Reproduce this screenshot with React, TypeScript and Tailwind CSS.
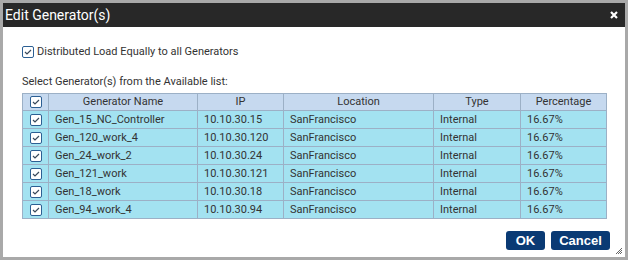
import React from 'react';

const rows = [
  { name: 'Gen_15_NC_Controller', ip: '10.10.30.15' },
  { name: 'Gen_120_work_4', ip: '10.10.30.120' },
  { name: 'Gen_24_work_2', ip: '10.10.30.24' },
  { name: 'Gen_121_work', ip: '10.10.30.121' },
  { name: 'Gen_18_work', ip: '10.10.30.18' },
  { name: 'Gen_94_work_4', ip: '10.10.30.94' },
];

function Check() {
  return (
    <span className="inline-flex w-[12px] h-[12px] items-center justify-center bg-white border border-[#2c5f93] rounded-[2px]">
      <svg width="8" height="8" viewBox="0 0 8 8" fill="none">
        <path d="M1 4l2 2 4-4" stroke="#3a4a5c" strokeWidth="1.2" />
      </svg>
    </span>
  );
}

export default function App() {
  return (
    <div
      className="relative w-[628px] h-[260px] border-[3px] border-[#a9a9a9] bg-white flex flex-col text-[#333]"
      style={{ fontFamily: 'Roboto, "Liberation Sans", sans-serif' }}
    >
      <div className="h-[24px] bg-[#282828] flex items-center justify-between pl-[2px] pr-[7px]">
        <span className="text-white text-[14px]">Edit Generator(s)</span>
        <svg width="8" height="8" viewBox="0 0 8 8">
          <path d="M1 1l6 6M7 1l-6 6" stroke="#fff" strokeWidth="2.2" />
        </svg>
      </div>

      <div className="flex flex-col px-[19px] flex-1">
        <label className="mt-[19px] h-[12px] flex items-center gap-[3px] text-[11px]">
          <Check />
          <span>Distributed Load Equally to all Generators</span>
        </label>
        <div className="mt-[16px] h-[16px] leading-[16px] text-[11px]">
          Select Generator(s) from the Available list:
        </div>

        <table className="mt-[3px] w-[584px] border-collapse table-fixed text-[11px]">
          <colgroup>
            <col className="w-[26px]" />
            <col className="w-[149px]" />
            <col className="w-[86px]" />
            <col className="w-[150px]" />
            <col className="w-[87px]" />
            <col className="w-[86px]" />
          </colgroup>
          <thead>
            <tr className="leading-[16px] bg-[#c6d9ef]">
              <th className="border border-[#9cb0c6] p-0 align-middle">
                <div className="flex justify-center"><Check /></div>
              </th>
              <th className="border border-[#9cb0c6] font-normal p-0">Generator Name</th>
              <th className="border border-[#9cb0c6] font-normal p-0">IP</th>
              <th className="border border-[#9cb0c6] font-normal p-0">Location</th>
              <th className="border border-[#9cb0c6] font-normal p-0">Type</th>
              <th className="border border-[#9cb0c6] font-normal p-0">Percentage</th>
            </tr>
          </thead>
          <tbody>
            {rows.map((r) => (
              <tr key={r.name} className="leading-[17px] bg-[#a3e2f1]">
                <td className="border border-[#9cb0c6] p-0">
                  <div className="flex justify-center"><Check /></div>
                </td>
                <td className="border border-[#9cb0c6] py-0 px-[6px]">{r.name}</td>
                <td className="border border-[#9cb0c6] py-0 px-[6px]">{r.ip}</td>
                <td className="border border-[#9cb0c6] py-0 px-[6px]">SanFrancisco</td>
                <td className="border border-[#9cb0c6] py-0 px-[6px]">Internal</td>
                <td className="border border-[#9cb0c6] py-0 px-[6px]">16.67%</td>
              </tr>
            ))}
          </tbody>
        </table>

        <div className="mt-[12px] flex justify-end gap-[6px] mr-[-4px]">
          <button
            className="w-[39px] h-[19px] rounded-[3px] bg-[#0a3a74] text-white text-[13px] font-bold leading-none"
            style={{ fontFamily: '"Liberation Sans", Arial, sans-serif' }}
          >
            OK
          </button>
          <button
            className="w-[59px] h-[19px] rounded-[3px] bg-[#0a3a74] text-white text-[13px] font-bold leading-none"
            style={{ fontFamily: '"Liberation Sans", Arial, sans-serif' }}
          >
            Cancel
          </button>
        </div>
      </div>

      <svg className="absolute right-[2px] bottom-[2px]" width="8" height="8" viewBox="0 0 8 8">
        <path d="M7 1L1 7M7 3L3 7M7 5L5 7" stroke="#666" strokeWidth="1" />
      </svg>
    </div>
  );
}
